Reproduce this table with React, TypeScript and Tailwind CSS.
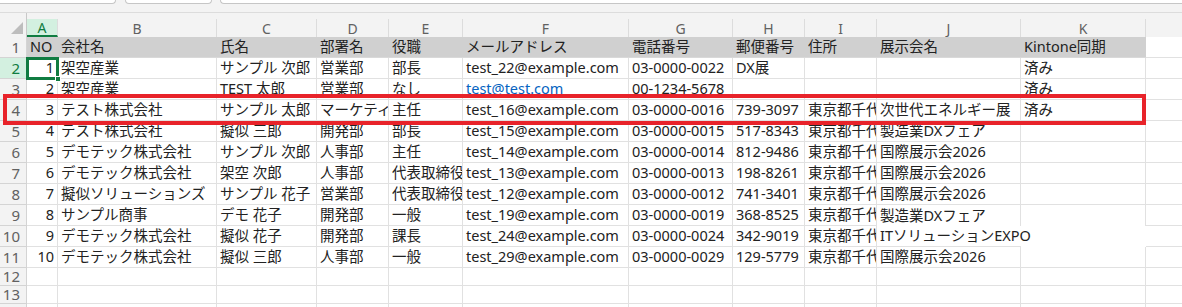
const FONT = { fontFamily: '"Noto Sans", "Noto Sans CJK JP", sans-serif' }

const colW = [
  'w-[31px]',
  'w-[159px]',
  'w-[100px]',
  'w-[72px]',
  'w-[74px]',
  'w-[166px]',
  'w-[104px]',
  'w-[72px]',
  'w-[72px]',
  'w-[144px]',
  'w-[125px]',
]
const letters = ['A', 'B', 'C', 'D', 'E', 'F', 'G', 'H', 'I', 'J', 'K']

const header = ['NO', '会社名', '氏名', '部署名', '役職', 'メールアドレス', '電話番号', '郵便番号', '住所', '展示会名', 'Kintone同期']

const rows: string[][] = [
  ['1', '架空産業', 'サンプル 次郎', '営業部', '部長', 'test_22@example.com', '03-0000-0022', 'DX展', '', '', '済み'],
  ['2', '架空産業', 'TEST 太郎', '営業部', 'なし', 'test@test.com', '00-1234-5678', '', '', '', '済み'],
  ['3', 'テスト株式会社', 'サンプル 太郎', 'マーケティング', '主任', 'test_16@example.com', '03-0000-0016', '739-3097', '東京都千代田区', '次世代エネルギー展', '済み'],
  ['4', 'テスト株式会社', '擬似 三郎', '開発部', '部長', 'test_15@example.com', '03-0000-0015', '517-8343', '東京都千代田区', '製造業DXフェア', ''],
  ['5', 'デモテック株式会社', 'サンプル 次郎', '人事部', '主任', 'test_14@example.com', '03-0000-0014', '812-9486', '東京都千代田区', '国際展示会2026', ''],
  ['6', 'デモテック株式会社', '架空 次郎', '人事部', '代表取締役', 'test_13@example.com', '03-0000-0013', '198-8261', '東京都千代田区', '国際展示会2026', ''],
  ['7', '擬似ソリューションズ', 'サンプル 花子', '営業部', '代表取締役', 'test_12@example.com', '03-0000-0012', '741-3401', '東京都千代田区', '国際展示会2026', ''],
  ['8', 'サンプル商事', 'デモ 花子', '開発部', '一般', 'test_19@example.com', '03-0000-0019', '368-8525', '東京都千代田区', '製造業DXフェア', ''],
  ['9', 'デモテック株式会社', '擬似 花子', '開発部', '課長', 'test_24@example.com', '03-0000-0024', '342-9019', '東京都千代田区', 'ITソリューションEXPO', ''],
  ['10', 'デモテック株式会社', '擬似 三郎', '人事部', '一般', 'test_29@example.com', '03-0000-0029', '129-5779', '東京都千代田区', '国際展示会2026', ''],
]

// sheet row numbers 2..11 hold data; quirks in gridlines around J10/K10
function noBottom(r: number, c: number) {
  return (r === 9 && (c === 9 || c === 10)) || (r === 10 && c === 10)
}
function noRight(r: number, c: number) {
  return r === 10 && (c === 9 || c === 10)
}

function RowHead({ n, h, active }: { n: number; h: string; active?: boolean }) {
  return (
    <div
      className={`${h} w-[27px] shrink-0 flex items-center justify-end pr-[6px] border-r border-b border-[#d4d4d4] text-[15px] ${
        active ? 'bg-[#d3f0e0] text-[#107c41]' : 'bg-[#f3f3f3] text-[#616161]'
      }`}
    >
      {n}
    </div>
  )
}

export default function App() {
  return (
    <div className="relative w-[1182px] h-[307px] overflow-hidden bg-white text-[#222]" style={FONT}>
      {/* toolbar remnants */}
      <div className="h-[12px] bg-[#f3f3f3] flex items-start">
        <div className="w-[116px] h-[4px] bg-white border-r border-b border-[#c6c6c6] rounded-br-[4px]" />
        <div className="ml-[9px] w-[87px] h-[4px] bg-white border border-t-0 border-[#c6c6c6] rounded-b-[4px]" />
        <div className="ml-[8px] flex-1 h-[4px] bg-white border-l border-b border-[#c6c6c6] rounded-bl-[4px]" />
      </div>

      {/* column headers */}
      <div className="h-[25px] bg-[#f3f3f3] border-t border-[#dcdcdc] flex items-end">
        <div className="w-[27px] h-full shrink-0 border-r border-[#c8c8c8] flex items-end justify-end pr-[3px] pb-[3px]">
          <svg width="12" height="12" viewBox="0 0 12 12">
            <polygon points="12,0 12,12 0,12" fill="#bdbdbd" />
          </svg>
        </div>
        {letters.map((l, i) => (
          <div
            key={l}
            className={`${colW[i]} h-[18px] shrink-0 flex items-center justify-center text-[14px] border-r border-[#dcdcdc] ${
              i === 0 ? 'bg-[#d3f0e0] text-[#107c41] border-b-2 border-b-[#107c41]' : 'text-[#616161]'
            }`}
          >
            {l}
          </div>
        ))}
        <div className="flex-1 h-[18px]" />
      </div>

      {/* sheet row 1 */}
      <div className="flex h-[21px] text-[14.5px]">
        <RowHead n={1} h="h-[21px]" />
        {header.map((t, i) => (
          <div
            key={i}
            className={`${colW[i]} shrink-0 bg-[#d0d0d0] border-b border-[#d9d9d9] flex items-center pl-[3px] whitespace-nowrap overflow-hidden`}
          >
            {t}
          </div>
        ))}
        <div className="flex-1 border-b border-[#e1e1e1]" />
      </div>

      {/* data rows */}
      {rows.map((row, ri) => {
        const r = ri + 2
        return (
          <div key={r} className="flex h-[21px] text-[14.5px]">
            <RowHead n={r} h="h-[21px]" active={r === 2} />
            {row.map((t, c) => {
              const spill = r === 10 && c === 9
              return (
                <div
                  key={c}
                  className={`${colW[c]} shrink-0 flex items-center whitespace-nowrap border-[#e1e1e1] ${
                    noBottom(r, c) ? '' : 'border-b'
                  } ${noRight(r, c) ? '' : 'border-r'} ${c === 0 ? 'justify-end pr-[3px]' : 'pl-[3px]'} ${
                    spill ? 'overflow-visible relative z-10' : 'overflow-hidden'
                  }`}
                >
                  {r === 3 && c === 5 ? <span className="text-[#0563c1] underline underline-offset-2">{t}</span> : t}
                </div>
              )
            })}
            <div className="flex-1 border-b border-[#e1e1e1]" />
          </div>
        )
      })}

      {/* empty rows */}
      {[12, 13, 14].map((r) => (
        <div key={r} className="flex h-[18px] text-[14.5px]">
          <RowHead n={r} h="h-[18px]" />
          {colW.map((w, c) => (
            <div key={c} className={`${w} shrink-0 border-b border-r border-[#e1e1e1]`} />
          ))}
          <div className="flex-1 border-b border-[#e1e1e1]" />
        </div>
      ))}

      {/* active cell A2 */}
      <div className="absolute left-[26px] top-[57px] w-[33px] h-[23px] border-2 border-solid border-[#107c41] shadow-[inset_0_0_0_1px_#107c41] z-20 pointer-events-none" />
      <div className="absolute left-[55px] top-[76px] w-[6px] h-[6px] bg-[#107c41] border border-white z-20" />

      {/* highlight box around sheet row 4 */}
      <div className="absolute left-[3px] top-[94px] w-[1143px] h-[31px] border-4 border-[#e8232a] z-30 pointer-events-none" />
    </div>
  )
}
